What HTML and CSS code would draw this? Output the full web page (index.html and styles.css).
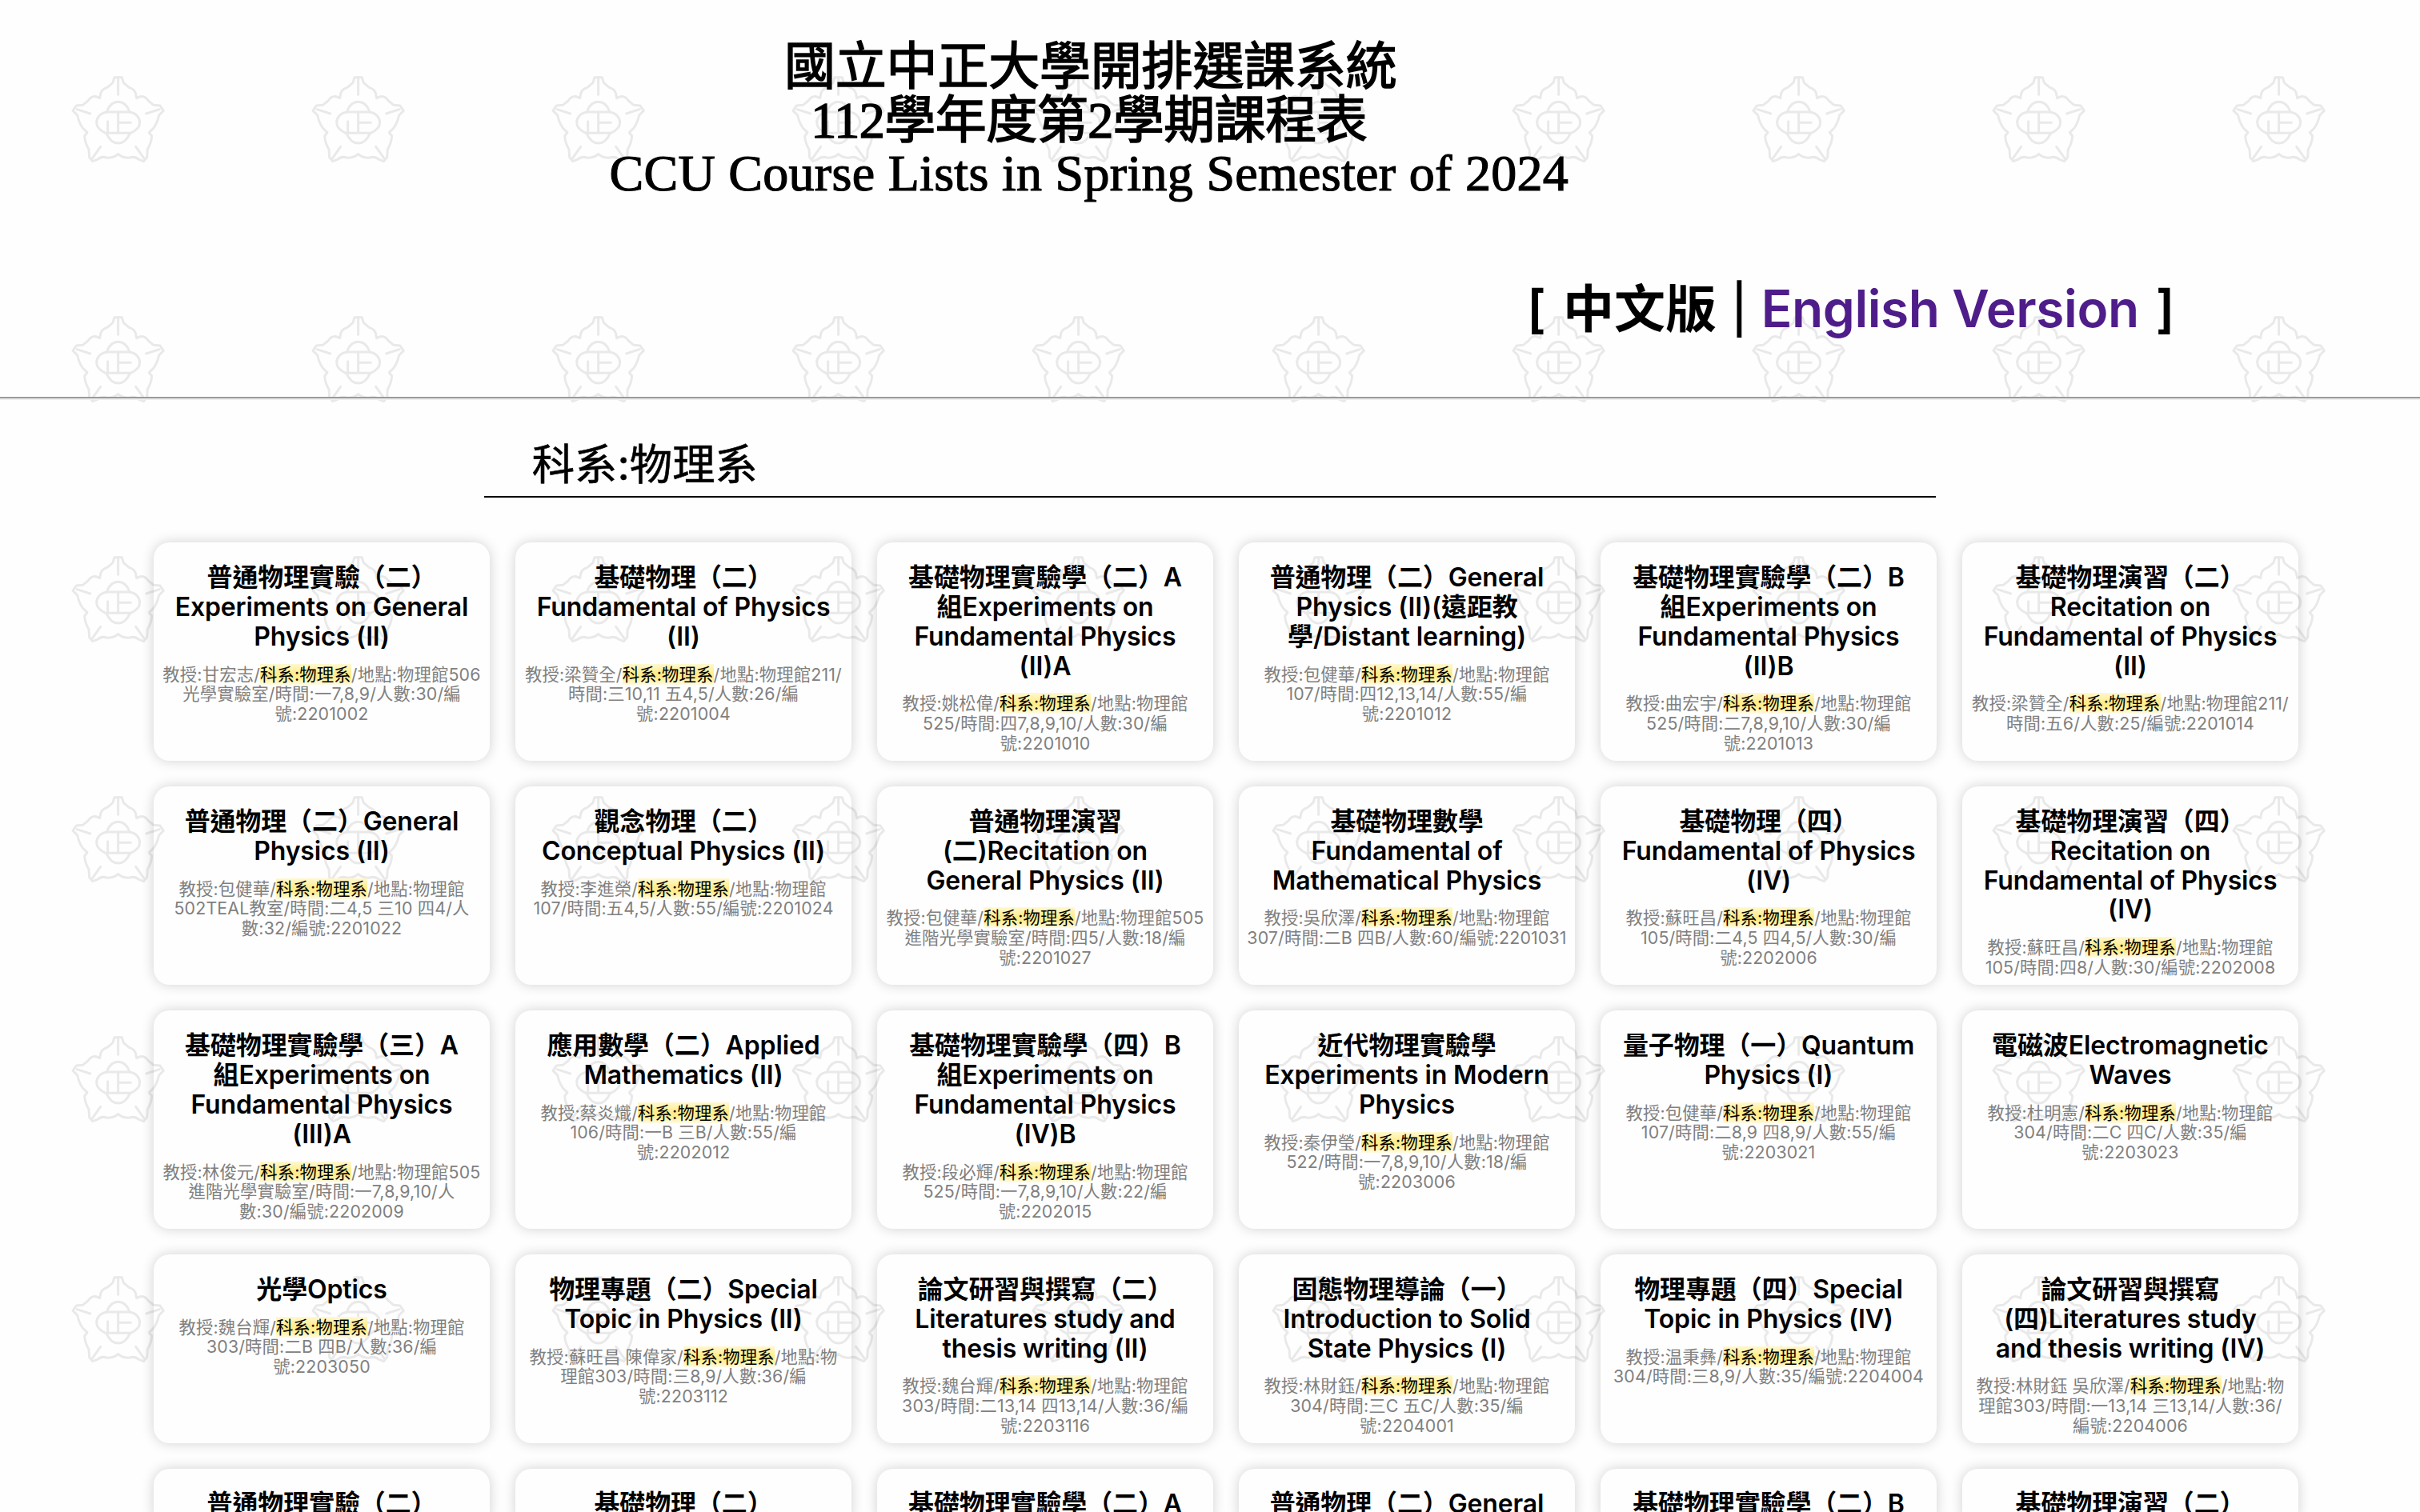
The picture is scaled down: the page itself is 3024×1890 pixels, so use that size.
FILE: index.html
```html
<!DOCTYPE html>
<html lang="zh-Hant">
<head>
<meta charset="utf-8">
<title>國立中正大學開排選課系統</title>
<link rel="stylesheet" href="styles.css">
</head>
<body>
<header class="banner">
  <h1 class="banner-title">
    <span class="banner-name">國立中正大學開排選課系統</span>
    <span class="banner-term">112學年度第2學期課程表</span>
    <span class="banner-latin">CCU Course Lists in Spring Semester of 2024</span>
  </h1>
  <nav class="lang"><span>[</span><span class="lang-current">中文版</span><span class="lang-bar">|</span><a class="lang-link" href="#">English Version</a><span>]</span></nav>
</header>
<hr class="rule">
<main>
  <div class="search">科系:物理系</div>
  <ul class="courses">
    <li class="card"><h2>普通物理實驗（二）<br>Experiments on General<br>Physics (II)</h2><p>教授:甘宏志/<mark>科系:物理系</mark>/地點:物理館506<br>光學實驗室/時間:一7,8,9/人數:30/編<br>號:2201002</p></li>
    <li class="card"><h2>基礎物理（二）<br>Fundamental of Physics<br>(II)</h2><p>教授:梁贊全/<mark>科系:物理系</mark>/地點:物理館211/<br>時間:三10,11 五4,5/人數:26/編<br>號:2201004</p></li>
    <li class="card"><h2>基礎物理實驗學（二）A<br>組Experiments on<br>Fundamental Physics<br>(II)A</h2><p>教授:姚松偉/<mark>科系:物理系</mark>/地點:物理館<br>525/時間:四7,8,9,10/人數:30/編<br>號:2201010</p></li>
    <li class="card"><h2>普通物理（二）General<br>Physics (II)(遠距教<br>學/Distant learning)</h2><p>教授:包健華/<mark>科系:物理系</mark>/地點:物理館<br>107/時間:四12,13,14/人數:55/編<br>號:2201012</p></li>
    <li class="card"><h2>基礎物理實驗學（二）B<br>組Experiments on<br>Fundamental Physics<br>(II)B</h2><p>教授:曲宏宇/<mark>科系:物理系</mark>/地點:物理館<br>525/時間:二7,8,9,10/人數:30/編<br>號:2201013</p></li>
    <li class="card"><h2>基礎物理演習（二）<br>Recitation on<br>Fundamental of Physics<br>(II)</h2><p>教授:梁贊全/<mark>科系:物理系</mark>/地點:物理館211/<br>時間:五6/人數:25/編號:2201014</p></li>

    <li class="card"><h2>普通物理（二）General<br>Physics (II)</h2><p>教授:包健華/<mark>科系:物理系</mark>/地點:物理館<br>502TEAL教室/時間:二4,5 三10 四4/人<br>數:32/編號:2201022</p></li>
    <li class="card"><h2>觀念物理（二）<br>Conceptual Physics (II)</h2><p>教授:李進榮/<mark>科系:物理系</mark>/地點:物理館<br>107/時間:五4,5/人數:55/編號:2201024</p></li>
    <li class="card"><h2>普通物理演習<br>(二)Recitation on<br>General Physics (II)</h2><p>教授:包健華/<mark>科系:物理系</mark>/地點:物理館505<br>進階光學實驗室/時間:四5/人數:18/編<br>號:2201027</p></li>
    <li class="card"><h2>基礎物理數學<br>Fundamental of<br>Mathematical Physics</h2><p>教授:吳欣澤/<mark>科系:物理系</mark>/地點:物理館<br>307/時間:二B 四B/人數:60/編號:2201031</p></li>
    <li class="card"><h2>基礎物理（四）<br>Fundamental of Physics<br>(IV)</h2><p>教授:蘇旺昌/<mark>科系:物理系</mark>/地點:物理館<br>105/時間:二4,5 四4,5/人數:30/編<br>號:2202006</p></li>
    <li class="card"><h2>基礎物理演習（四）<br>Recitation on<br>Fundamental of Physics<br>(IV)</h2><p>教授:蘇旺昌/<mark>科系:物理系</mark>/地點:物理館<br>105/時間:四8/人數:30/編號:2202008</p></li>

    <li class="card"><h2>基礎物理實驗學（三）A<br>組Experiments on<br>Fundamental Physics<br>(III)A</h2><p>教授:林俊元/<mark>科系:物理系</mark>/地點:物理館505<br>進階光學實驗室/時間:一7,8,9,10/人<br>數:30/編號:2202009</p></li>
    <li class="card"><h2>應用數學（二）Applied<br>Mathematics (II)</h2><p>教授:蔡炎熾/<mark>科系:物理系</mark>/地點:物理館<br>106/時間:一B 三B/人數:55/編<br>號:2202012</p></li>
    <li class="card"><h2>基礎物理實驗學（四）B<br>組Experiments on<br>Fundamental Physics<br>(IV)B</h2><p>教授:段必輝/<mark>科系:物理系</mark>/地點:物理館<br>525/時間:一7,8,9,10/人數:22/編<br>號:2202015</p></li>
    <li class="card"><h2>近代物理實驗學<br>Experiments in Modern<br>Physics</h2><p>教授:秦伊瑩/<mark>科系:物理系</mark>/地點:物理館<br>522/時間:一7,8,9,10/人數:18/編<br>號:2203006</p></li>
    <li class="card"><h2>量子物理（一）Quantum<br>Physics (I)</h2><p>教授:包健華/<mark>科系:物理系</mark>/地點:物理館<br>107/時間:二8,9 四8,9/人數:55/編<br>號:2203021</p></li>
    <li class="card"><h2>電磁波Electromagnetic<br>Waves</h2><p>教授:杜明憲/<mark>科系:物理系</mark>/地點:物理館<br>304/時間:二C 四C/人數:35/編<br>號:2203023</p></li>

    <li class="card"><h2>光學Optics</h2><p>教授:魏台輝/<mark>科系:物理系</mark>/地點:物理館<br>303/時間:二B 四B/人數:36/編<br>號:2203050</p></li>
    <li class="card"><h2>物理專題（二）Special<br>Topic in Physics (II)</h2><p>教授:蘇旺昌 陳偉家/<mark>科系:物理系</mark>/地點:物<br>理館303/時間:三8,9/人數:36/編<br>號:2203112</p></li>
    <li class="card"><h2>論文研習與撰寫（二）<br>Literatures study and<br>thesis writing (II)</h2><p>教授:魏台輝/<mark>科系:物理系</mark>/地點:物理館<br>303/時間:二13,14 四13,14/人數:36/編<br>號:2203116</p></li>
    <li class="card"><h2>固態物理導論（一）<br>Introduction to Solid<br>State Physics (I)</h2><p>教授:林財鈺/<mark>科系:物理系</mark>/地點:物理館<br>304/時間:三C 五C/人數:35/編<br>號:2204001</p></li>
    <li class="card"><h2>物理專題（四）Special<br>Topic in Physics (IV)</h2><p>教授:温秉彝/<mark>科系:物理系</mark>/地點:物理館<br>304/時間:三8,9/人數:35/編號:2204004</p></li>
    <li class="card"><h2>論文研習與撰寫<br>(四)Literatures study<br>and thesis writing (IV)</h2><p>教授:林財鈺 吳欣澤/<mark>科系:物理系</mark>/地點:物<br>理館303/時間:一13,14 三13,14/人數:36/<br>編號:2204006</p></li>

    <li class="card"><h2>普通物理實驗（二）</h2></li>
    <li class="card"><h2>基礎物理（二）</h2></li>
    <li class="card"><h2>基礎物理實驗學（二）A</h2></li>
    <li class="card"><h2>普通物理（二）General</h2></li>
    <li class="card"><h2>基礎物理實驗學（二）B</h2></li>
    <li class="card"><h2>基礎物理演習（二）</h2></li>
  </ul>
</main>
</body>
</html>
```
FILE: styles.css
```css
* {
  box-sizing: border-box;
}

body {
  margin: 0;
  height: 1890px;
  overflow: hidden;
  color: #000;
  font-family: Inter, "Noto Sans CJK TC", sans-serif;
  background-color: #fefefe;
  /* plum-blossom crest, repeated every 300px */
  background-image: url("data:image/svg+xml,%3Csvg xmlns='http://www.w3.org/2000/svg' width='300' height='300'%3E%3Cg transform='translate(60 70) scale(.33333)' fill='none' stroke='%23e9e9e9' stroke-width='9' stroke-linejoin='round' stroke-linecap='round'%3E%3Cpath id='h' d='M263 80H249L243 100L222 118Q203 124 198 138L194 158L180 152Q163 148 150 168L130 184L106 186L93 205L110 222Q116 250 130 270L147 287L137 300Q139 328 153 350L155 380L167 395L185 388Q200 375 220 381Q245 384 263 368M108 200L158 216M197 340L165 385'/%3E%3Cuse href='%23h' transform='matrix(-1 0 0 1 526 0)'/%3E%3Cpath d='M263 80V145'/%3E%3Cpath d='M220 210H306M263 210V288M263 250H310M224 245V288M215 289H311M221 207C230 184 245 172 263 172S296 184 305 207M220 211C196 213 182 232 182 250S200 282 218 290M306 211C330 213 344 232 344 250S326 282 308 290M220 292C230 315 245 327 263 327S296 315 306 292'/%3E%3C/g%3E%3C/svg%3E");
  background-size: 300px 300px;
}

.banner {
  width: 90%;
  padding-top: 51px;
}

.banner-title {
  display: flex;
  flex-direction: column;
  align-items: center;
  margin: 0;
  font: 400 64px/66.6px "Liberation Serif", "Noto Sans CJK TC", serif;
  -webkit-text-stroke: 1.6px #000;
  white-space: nowrap;
}

.banner-name {
  padding-left: 4px;
  letter-spacing: -0.2px;
}

.banner-term {
  letter-spacing: -0.5px;
}

.banner-latin {
  letter-spacing: 0.3px;
  -webkit-text-stroke-width: 1.2px;
}

.lang {
  display: flex;
  justify-content: flex-end;
  gap: 21px;
  margin-top: 98px;
  padding-right: 4px;
  font-size: 64px;
  font-weight: 600;
  line-height: 74px;
  white-space: nowrap;
}

.lang-current {
  margin-right: -3px;
}

.lang-bar {
  margin-right: -4px;
  font-weight: 500;
  font-size: 60px;
}

.lang-link {
  color: #4f1d8a;
  letter-spacing: -0.4px;
  text-decoration: none;
}

.rule {
  height: 4px;
  margin: 73px 0 0;
  border: 0;
  border-top: 2px solid #9a9a9a;
  border-bottom: 2px solid #eee;
}

.search {
  width: 60%;
  height: 122px;
  margin: 0 auto;
  padding: 41px 60px 0;
  border-bottom: 2px solid #000;
  font-size: 53.33px;
  line-height: 80px;
  -webkit-text-stroke: 0.6px #000;
}

.courses {
  display: grid;
  grid-template-columns: repeat(6, 420px);
  gap: 32px;
  margin: 56px 0 0;
  padding: 0 0 0 192px;
  list-style: none;
}

.card {
  padding: 26.5px 0 9.5px;
  border-radius: 20px;
  box-shadow: 0 0 16px rgba(0, 0, 0, 0.18);
  text-align: center;
  white-space: nowrap;
}

.card h2 {
  margin: 0;
  font-size: 32px;
  font-weight: 600;
  letter-spacing: -0.13px;
  line-height: 36.8px;
}

.card p {
  margin: 16px 0 0;
  color: #808080;
  font-size: 21.33px;
  letter-spacing: 0.17px;
  line-height: 24.53px;
}

mark {
  color: #000;
  background: linear-gradient(#fff8d0, #ffec8b 45%, #ffec8b 65%, #fffbe4);
}
```
